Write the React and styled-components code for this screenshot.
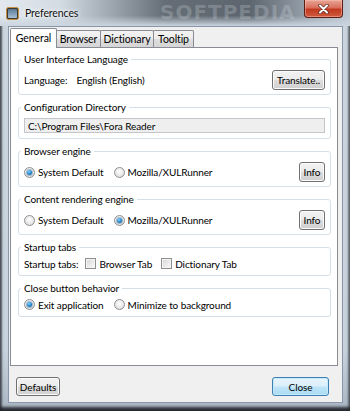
import React from "react";
import styled, { createGlobalStyle, css } from "styled-components";

const GlobalStyle = createGlobalStyle`
  html, body {
    margin: 0;
    padding: 0;
  }
  body {
    width: 350px;
    height: 411px;
    overflow: hidden;
    font-family: Lato, "Liberation Sans", sans-serif;
    font-size: 10px;
    letter-spacing: -0.1px;
    color: #000;
  }
`;

const Window = styled.div`
  position: relative;
  width: 350px;
  height: 411px;
  box-sizing: border-box;
  display: flex;
  flex-direction: column;
  overflow: hidden;
  background: linear-gradient(180deg, #cbd5df 0%, #c7d2dd 85%, #aab6c3 100%);
  box-shadow: inset 2px 0 2px rgba(30, 34, 40, 0.6),
    inset -2px 0 2px rgba(30, 34, 40, 0.45),
    inset 0 -4px 3px rgba(15, 15, 20, 0.8);
`;

const TitleBar = styled.div`
  position: relative;
  height: 26px;
  flex: none;
  display: flex;
  align-items: flex-start;
  padding: 0 7px 0 6px;
  background: linear-gradient(180deg, rgba(205, 214, 224, 0) 0%, rgba(205, 214, 224, 0) 60%, rgba(203, 213, 223, 1) 100%),
    linear-gradient(90deg, #e2e8ee 0px, #d3dbe3 60px, #9aa3ac 115px, #656d76 165px, #5d656e 250px, #8f99a3 300px, #c0cad4 350px);
`;

const Watermark = styled.div`
  position: absolute;
  left: 160px;
  top: 0;
  font-family: "DejaVu Sans", sans-serif;
  font-weight: bold;
  font-size: 20px;
  letter-spacing: 1px;
  color: rgba(230, 236, 242, 0.22);
  pointer-events: none;
`;

const TitleIcon = styled.svg`
  margin-top: 7px;
  flex: none;
`;

const TitleText = styled.div`
  margin: 5px 0 0 6px;
  font-size: 10.5px;
  line-height: 16px;
  color: #101010;
  text-shadow: 0 0 6px rgba(255, 255, 255, 0.95), 0 0 3px rgba(255, 255, 255, 0.9);
`;

const CloseBox = styled.div`
  position: relative;
  margin-left: auto;
  width: 39px;
  height: 18px;
  box-sizing: border-box;
  display: flex;
  align-items: center;
  justify-content: center;
  border: 1px solid #5b1f16;
  border-top: none;
  border-radius: 0 0 4px 4px;
  background: linear-gradient(180deg, #e7a595 0%, #d9705c 45%, #c2391f 55%, #cf5a3e 100%);
  box-shadow: inset 0 0 0 1px rgba(255, 200, 190, 0.45);
`;

const Client = styled.div`
  flex: 1;
  margin: 0 7px 8px 8px;
  display: flex;
  flex-direction: column;
  background: #f0f0f0;
  border: 1px solid #8796a8;
  padding: 1px 4px 0 1px;
  min-height: 0;
`;

const TabStrip = styled.div`
  position: relative;
  z-index: 1;
  height: 20px;
  display: flex;
  align-items: flex-end;
`;

const Tab = styled.div`
  box-sizing: border-box;
  width: ${(p) => p.$w}px;
  height: 17px;
  margin-bottom: 1px;
  margin-left: -1px;
  display: flex;
  align-items: center;
  justify-content: center;
  font-size: 10.5px;
  border: 1px solid #898c95;
  border-bottom: none;
  border-radius: 2px 2px 0 0;
  background: linear-gradient(180deg, #f3f3f3 0%, #ebebeb 50%, #dedede 51%, #d5d5d5 100%);
  ${(p) =>
    p.$active &&
    css`
      height: 20px;
      margin-bottom: 0;
      margin-left: 0;
      padding-bottom: 2px;
      background: #fff;
    `}
`;

const Panel = styled.div`
  flex: 1;
  margin-top: -1px;
  display: flex;
  flex-direction: column;
  gap: 5px;
  padding: 4px 6px 0 7px;
  background: #fff;
  border: 1px solid #898c95;
`;

const Group = styled.fieldset`
  margin: 0;
  min-width: 0;
  padding: ${(p) => p.$pad || "4px 5px 4px"};
  border: 1px solid #d5dfe5;
  border-radius: 3px;
`;

const Legend = styled.legend`
  margin-left: -3px;
  padding: 0 3px;
  line-height: 14px;
`;

const Row = styled.div`
  display: flex;
  align-items: center;
  height: ${(p) => p.$h || 20}px;
`;

const Text = styled.span`
  margin-left: ${(p) => p.$gap || 0}px;
  white-space: nowrap;
`;

const Button = styled.button`
  box-sizing: border-box;
  width: ${(p) => p.$w}px;
  height: ${(p) => p.$h || 20}px;
  margin-left: ${(p) => (p.$push ? "auto" : "0")};
  padding: 0;
  font: inherit;
  letter-spacing: inherit;
  color: #000;
  border: 1px solid #707070;
  border-radius: 3px;
  background: linear-gradient(180deg, #f2f2f2 0%, #ebebeb 48%, #dddddd 52%, #cfcfcf 100%);
  box-shadow: inset 0 0 0 1px #fbfbfb;
  ${(p) =>
    p.$default &&
    css`
      border-color: #3c7fb1;
      background: linear-gradient(180deg, #e9f5fc 0%, #d9effb 48%, #bfe5f7 52%, #a9daf3 100%);
      box-shadow: inset 0 0 0 1px #c6eafc;
    `}
`;

const TextBox = styled.div`
  box-sizing: border-box;
  height: 15px;
  display: flex;
  align-items: center;
  padding-left: 3px;
  background: #efefef;
  border: 1px solid #c4c6cb;
`;

const Radio = styled.span`
  box-sizing: border-box;
  width: 11px;
  height: 11px;
  margin-left: ${(p) => p.$gap || 0}px;
  flex: none;
  border-radius: 50%;
  border: 1px solid #8d8f93;
  background: radial-gradient(circle at 50% 40%, #ffffff 0%, #e9e9e9 55%, #cfcfcf 100%);
  display: flex;
  align-items: center;
  justify-content: center;
  &::after {
    content: "";
    display: ${(p) => (p.$checked ? "block" : "none")};
    width: 5px;
    height: 5px;
    border-radius: 50%;
    background: radial-gradient(circle at 40% 35%, #8fd6ff 0%, #2a8fd4 45%, #0b4f86 100%);
    box-shadow: 0 0 0 1px rgba(30, 90, 140, 0.35);
  }
`;

const Check = styled.span`
  box-sizing: border-box;
  width: 11px;
  height: 11px;
  margin-left: ${(p) => p.$gap || 0}px;
  flex: none;
  border: 1px solid #8e8f8f;
  background: linear-gradient(135deg, #d6d6d6 0%, #ececec 60%, #fafafa 100%);
  box-shadow: inset 0 0 0 1px #f4f4f4;
`;

const Footer = styled.div`
  flex: none;
  display: flex;
  justify-content: space-between;
  padding: 11px 9px 6px 6px;
`;

function RadioOption({ checked, label, gap }) {
  return (
    <>
      <Radio $checked={checked} $gap={gap} />
      <Text $gap={3}>{label}</Text>
    </>
  );
}

function CheckOption({ label, gap }) {
  return (
    <>
      <Check $gap={gap} />
      <Text $gap={3}>{label}</Text>
    </>
  );
}

export default function App() {
  return (
    <>
      <GlobalStyle />
      <Window>
        <TitleBar>
          <Watermark>SOFTPEDIA</Watermark>
          <TitleIcon width="13" height="13" viewBox="0 0 13 13">
            <defs>
              <linearGradient id="ic" x1="0" y1="0" x2="0" y2="1">
                <stop offset="0" stopColor="#5b7895" />
                <stop offset="1" stopColor="#a7c0d6" />
              </linearGradient>
            </defs>
            <rect x="0.5" y="0.5" width="12" height="12" rx="2" fill="#3d3a34" stroke="#c98f3e" />
            <rect x="2" y="2" width="9" height="9" rx="1" fill="url(#ic)" />
          </TitleIcon>
          <TitleText>Preferences</TitleText>
          <CloseBox>
            <svg width="11" height="10" viewBox="0 0 11 10">
              <path d="M2 1.5 L9 8.5 M9 1.5 L2 8.5" stroke="#5a2a22" strokeWidth="3.4" strokeLinecap="round" />
              <path d="M2 1.5 L9 8.5 M9 1.5 L2 8.5" stroke="#ffffff" strokeWidth="2" strokeLinecap="round" />
            </svg>
          </CloseBox>
        </TitleBar>

        <Client>
          <TabStrip>
            <Tab $active $w={47}>General</Tab>
            <Tab $w={45}>Browser</Tab>
            <Tab $w={54}>Dictionary</Tab>
            <Tab $w={41}>Tooltip</Tab>
          </TabStrip>

          <Panel>
            <Group>
              <Legend>User Interface Language</Legend>
              <Row>
                <Text>Language:</Text>
                <Text $gap={9}>English (English)</Text>
                <Button $w={53} $push>
                  Translate..
                </Button>
              </Row>
            </Group>

            <Group $pad="4px 5px 5px">
              <Legend>Configuration Directory</Legend>
              <TextBox>C:\Program Files\Fora Reader</TextBox>
            </Group>

            <Group>
              <Legend>Browser engine</Legend>
              <Row>
                <RadioOption checked label="System Default" />
                <RadioOption label="Mozilla/XULRunner" gap={10} />
                <Button $w={26} $push>
                  Info
                </Button>
              </Row>
            </Group>

            <Group>
              <Legend>Content rendering engine</Legend>
              <Row>
                <RadioOption label="System Default" />
                <RadioOption checked label="Mozilla/XULRunner" gap={10} />
                <Button $w={26} $push>
                  Info
                </Button>
              </Row>
            </Group>

            <Group $pad="2px 5px 4px">
              <Legend>Startup tabs</Legend>
              <Row $h={15}>
                <Text>Startup tabs:</Text>
                <CheckOption label="Browser Tab" gap={7} />
                <CheckOption label="Dictionary Tab" gap={9} />
              </Row>
            </Group>

            <Group $pad="2px 5px 4px">
              <Legend>Close button behavior</Legend>
              <Row $h={15}>
                <RadioOption checked label="Exit application" />
                <RadioOption label="Minimize to background" gap={10} />
              </Row>
            </Group>
          </Panel>

          <Footer>
            <Button $w={44} $h={19}>
              Defaults
            </Button>
            <Button $w={57} $h={19} $default>
              Close
            </Button>
          </Footer>
        </Client>
      </Window>
    </>
  );
}
